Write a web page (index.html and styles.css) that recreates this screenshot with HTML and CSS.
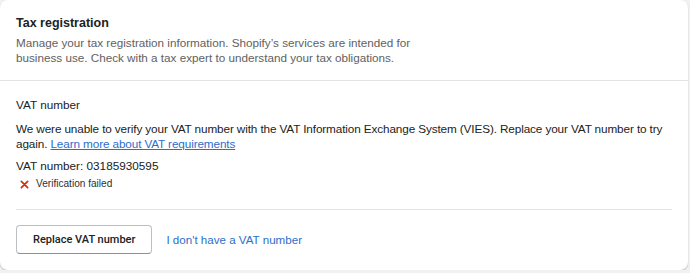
FILE: index.html
```html
<!DOCTYPE html>
<html lang="en">
<head>
    <meta charset="UTF-8">
    <meta name="viewport" content="width=device-width, initial-scale=1.0">
    <title>Tax registration</title>
    <link rel="stylesheet" href="styles.css">
</head>
<body>
    <div class="card">
        <div class="card-header">
            <h2 class="card-title">Tax registration</h2>
            <p class="card-subtitle">Manage your tax registration information. Shopify’s services are intended for<br>business use. Check with a tax expert to understand your tax obligations.</p>
        </div>

        <div class="card-section">
            <h3 class="field-label">VAT number</h3>
            <p class="message">We were unable to verify your VAT number with the VAT Information Exchange System (VIES). Replace your VAT number to try again. <a href="#">Learn more about VAT requirements</a></p>
            <p class="vat-value">VAT number: 03185930595</p>
            <div class="status">
                <svg class="status-icon" viewBox="0 0 10 10" width="9" height="9">
                    <path d="M1.5 1.5 L8.5 8.5 M8.5 1.5 L1.5 8.5" stroke="#d82c0d" stroke-width="1.9" stroke-linecap="round"/>
                </svg>
                <span>Verification failed</span>
            </div>

            <div class="actions">
                <button class="btn">Replace VAT number</button>
                <a href="#" class="plain-link">I don't have a VAT number</a>
            </div>
        </div>
    </div>
</body>
</html>
```

FILE: styles.css
```css
body {
    margin: 0;
    background-color: #f1f1f1;
    font-family: "Liberation Sans", Arial, sans-serif;
    color: #202223;
}

.card {
    width: 688px;
    height: 270px;
    background-color: #fff;
    border-radius: 8px;
    box-shadow: 0 1px 1px rgba(0, 0, 0, 0.15), 0 1px 2px rgba(0, 0, 0, 0.1);
    overflow: hidden;
}

.card-header {
    padding: 14px 16px 15px;
    border-bottom: 1px solid #e1e3e5;
}

.card-title {
    margin: 0 0 3px;
    font-size: 12.5px;
    font-weight: 700;
    line-height: 18px;
}

.card-subtitle {
    margin: 0;
    font-size: 11.7px;
    line-height: 15px;
    color: #616161;
}

.card-section {
    padding: 16px 16px 0;
}

.field-label {
    margin: 0 0 8px;
    font-size: 11.75px;
    font-weight: 400;
    line-height: 16px;
}

.message {
    margin: 0 0 7px;
    font-size: 11.75px;
    letter-spacing: -0.12px;
    line-height: 15px;
}

.message a {
    color: #2c6ecb;
}

.vat-value {
    margin: 0 0 3px;
    font-size: 11.75px;
    line-height: 16px;
}

.status {
    display: flex;
    align-items: center;
    gap: 7px;
    padding-left: 4px;
    font-size: 10.1px;
    line-height: 14px;
    color: #303030;
}

.actions {
    display: flex;
    align-items: center;
    gap: 14px;
    margin-top: 18px;
    padding-top: 15px;
    border-top: 1px solid #e1e3e5;
}

.btn {
    height: 29px;
    padding: 0 16px;
    background-color: #fff;
    border: 1px solid #babfc3;
    border-bottom-color: #8c9196;
    border-radius: 4px;
    font-family: Roboto, "Liberation Sans", sans-serif;
    font-size: 11px;
    font-weight: 500;
    color: #202223;
    cursor: pointer;
}

.plain-link {
    font-size: 11.6px;
    color: #2c6ecb;
    text-decoration: none;
}
```
